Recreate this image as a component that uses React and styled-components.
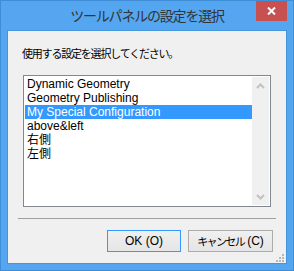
import React from 'react'
import styled, { createGlobalStyle } from "styled-components";

const GlobalStyle = createGlobalStyle`
  body {
    margin: 0;
    font-family: "Liberation Sans", "Noto Sans CJK JP", sans-serif;
  }
`;

export const Window = styled.div`
  box-sizing: border-box;
  width: 294px;
  height: 271px;
  display: flex;
  flex-direction: column;
  padding: 0 6px 6px;
  background-color: #55a6f0;
  border: 1px solid #3f8dd6;
`;

export const TitleBar = styled.div`
  height: 29px;
  display: grid;
  grid-template-columns: 1fr auto 1fr;
  align-items: start;
`;

export const Title = styled.div`
  grid-column: 2;
  padding-top: 5px;
  font-family: "Noto Sans CJK JP", sans-serif;
  font-size: 14px;
  line-height: 18px;
  letter-spacing: -1.2px;
  color: #333333;
`;

export const CloseButton = styled.div`
  justify-self: end;
  width: 31px;
  height: 20px;
  display: flex;
  align-items: center;
  justify-content: center;
  background-color: #c75050;
`;

export const Client = styled.div`
  flex: 1;
  position: relative;
  display: flex;
  flex-direction: column;
  background-color: #f0f0f0;
  border: 1px solid #4594dc;
`;

export const Label = styled.div`
  margin: 14px 0 0 14px;
  font-family: "Noto Sans CJK JP", sans-serif;
  font-size: 11px;
  line-height: 16px;
  letter-spacing: -1.2px;
  color: #000000;
`;

export const ListBox = styled.div`
  box-sizing: border-box;
  height: 132px;
  margin: 14px 15px 0;
  padding: 1px;
  display: flex;
  background-color: #ffffff;
  border: 1px solid #828790;
`;

export const Items = styled.ul`
  flex: 1;
  margin: 0;
  padding: 0;
  list-style: none;
`;

export const Item = styled.li`
  height: 14px;
  padding-left: 2px;
  font-size: 12px;
  line-height: 14px;
  white-space: nowrap;
  color: ${({selected}) => selected ? "#ffffff" : "#000000"};
  background-color: ${({selected}) => selected ? "#3399ff" : "transparent"};
`;

export const ScrollBar = styled.div`
  width: 17px;
  display: flex;
  flex-direction: column;
  justify-content: space-between;
  background-color: #f0f0f0;
`;

export const ScrollArrow = styled.div`
  height: 17px;
  display: flex;
  align-items: center;
  justify-content: center;
`;

export const Separator = styled.div`
  height: 1px;
  margin: 11px 10px 0;
  background-color: #a0a0a0;
`;

export const ButtonRow = styled.div`
  display: flex;
  justify-content: flex-end;
  gap: 7px;
  margin-top: 11px;
  padding-right: 13px;
`;

export const Button = styled.div`
  box-sizing: border-box;
  width: ${({w}) => w}px;
  height: 22px;
  display: flex;
  align-items: center;
  justify-content: center;
  font-size: 12px;
  color: #000000;
  background: linear-gradient(#f0f0f0, #e5e5e5);
  border: 1px solid ${({primary}) => primary ? "#3399ff" : "#acacac"};
`;

export const Kana = styled.span`
  font-family: "Noto Sans CJK JP", sans-serif;
  font-size: 11px;
  letter-spacing: -1.6px;
  margin-right: 3px;
`;

export const Grip = styled.svg`
  position: absolute;
  right: 2px;
  bottom: 1px;
`;

const items = [
    "Dynamic Geometry",
    "Geometry Publishing",
    "My Special Configuration",
    "above&left",
    "右側",
    "左側",
]

const Chevron = ({up}) => (
    <svg width="9" height="6" viewBox="0 0 9 6">
        <path d={up ? "M1 5 L4.5 1.5 L8 5" : "M1 1 L4.5 4.5 L8 1"} fill="none" stroke="#c2c2c2" strokeWidth="2"/>
    </svg>
)

const App = () => {
    return (
        <>
            <GlobalStyle/>
            <Window>
                <TitleBar>
                    <Title>ツールパネルの設定を選択</Title>
                    <CloseButton>
                        <svg width="9" height="8" viewBox="0 0 9 8">
                            <path d="M1 0.5 L8 7.5 M8 0.5 L1 7.5" stroke="#ffffff" strokeWidth="2"/>
                        </svg>
                    </CloseButton>
                </TitleBar>
                <Client>
                    <Label>使用する設定を選択してください。</Label>
                    <ListBox>
                        <Items>
                            {items.map((item, i) => (
                                <Item key={item} selected={i === 2}>{item}</Item>
                            ))}
                        </Items>
                        <ScrollBar>
                            <ScrollArrow><Chevron up/></ScrollArrow>
                            <ScrollArrow><Chevron/></ScrollArrow>
                        </ScrollBar>
                    </ListBox>
                    <Separator/>
                    <ButtonRow>
                        <Button w={74} primary>OK (O)</Button>
                        <Button w={85}><Kana>キャンセル</Kana>(C)</Button>
                    </ButtonRow>
                    <Grip width="8" height="8" viewBox="0 0 8 8">
                        <rect x="6" y="0" width="2" height="2" fill="#b8b8b8"/>
                        <rect x="3" y="3" width="2" height="2" fill="#b8b8b8"/>
                        <rect x="6" y="3" width="2" height="2" fill="#b8b8b8"/>
                        <rect x="0" y="6" width="2" height="2" fill="#b8b8b8"/>
                        <rect x="3" y="6" width="2" height="2" fill="#b8b8b8"/>
                        <rect x="6" y="6" width="2" height="2" fill="#b8b8b8"/>
                    </Grip>
                </Client>
            </Window>
        </>
    )
}

export default App
